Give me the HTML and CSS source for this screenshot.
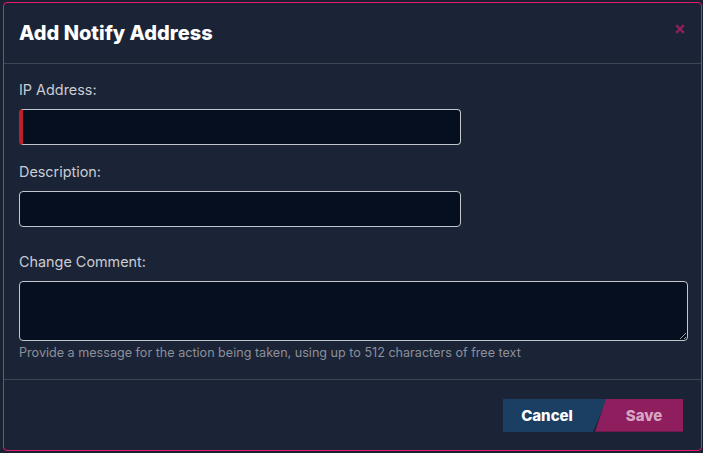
FILE: index.html
```html
<!DOCTYPE html>
<html>
<head>
<meta charset="utf-8">
<link rel="stylesheet" href="styles.css">
</head>
<body>
<div class="modal">
  <div class="modal-header">
    <h2 class="modal-title">Add Notify Address</h2>
    <span class="close"><svg width="10" height="10" viewBox="0 0 10 10"><path d="M1.2 1.2 L8.8 8.8 M8.8 1.2 L1.2 8.8" stroke="#8e1f5e" stroke-width="2.4" stroke-linecap="butt"/></svg></span>
  </div>
  <div class="modal-body">
    <div class="field">
      <label class="label">IP Address:</label>
      <input class="input invalid" type="text">
    </div>
    <div class="field field-wide">
      <label class="label">Description:</label>
      <input class="input" type="text">
    </div>
    <div class="field">
      <label class="label">Change Comment:</label>
      <textarea class="textarea"></textarea>
      <div class="help">Provide a message for the action being taken, using up to 512 characters of free text</div>
    </div>
  </div>
  <div class="modal-footer">
    <button class="btn btn-cancel">Cancel</button>
    <button class="btn btn-save">Save</button>
  </div>
</div>
</body>
</html>
```

FILE: styles.css
```css
html, body {
  margin: 0;
  padding: 0;
  background: #1a2131;
  font-family: Inter, "Noto Sans", sans-serif;
}
body {
  padding: 2px 1px 2px 3px;
  height: 453px;
  box-sizing: border-box;
}
.modal {
  box-sizing: border-box;
  width: 699px;
  height: 449px;
  border: 1px solid #e8196f;
  border-radius: 4px;
  background: #1b2336;
  display: flex;
  flex-direction: column;
}
.modal-header {
  height: 60px;
  border-bottom: 1px solid #3d4452;
  display: flex;
  align-items: center;
  justify-content: space-between;
  padding: 0 16px 0 15px;
  flex: none;
}
.modal-title {
  margin: 0;
  color: #ffffff;
  font-size: 20px;
  font-weight: 800;
  letter-spacing: 0;
}
.close {
  display: block;
  width: 10px;
  height: 10px;
  margin-top: -8px;
}
.close svg {
  display: block;
}
.modal-body {
  padding: 16px 13px 0 15px;
  flex: 1;
  border-bottom: 1px solid #3d4452;
}
.field {
  display: flex;
  flex-direction: column;
  margin-bottom: 17px;
}
.field-wide {
  margin-bottom: 25px;
}
.label {
  color: #c9ccd3;
  font-size: 14.4px;
  line-height: 20px;
  margin-bottom: 9px;
}
.input {
  box-sizing: border-box;
  width: 442px;
  height: 36px;
  background: #050f20;
  border: 1px solid #c3c6cd;
  border-radius: 4px;
  outline: none;
  color: #fff;
  font-family: inherit;
}
.input.invalid {
  border-left: 4px solid #bd1f2c;
}
.textarea {
  box-sizing: border-box;
  width: 669px;
  height: 60px;
  background: #050f20;
  border: 1px solid #c3c6cd;
  border-radius: 4px;
  outline: none;
  margin: 0;
  color: #fff;
  display: block;
}
.help {
  color: #8b909a;
  font-size: 12.6px;
  line-height: 16px;
  margin-top: 4px;
}
.modal-footer {
  flex: none;
  height: 70px;
  box-sizing: border-box;
  padding: 19px 18px 0 0;
  display: flex;
  justify-content: flex-end;
  align-items: flex-start;
}
.btn {
  border: none;
  height: 33px;
  font-family: Inter, "Noto Sans", sans-serif;
  font-size: 15px;
  font-weight: 800;
  cursor: pointer;
}
.btn-cancel {
  width: 104px;
  background: #1b3f62;
  color: #ffffff;
  clip-path: polygon(0 0, 100% 0, calc(100% - 14px) 100%, 0 100%);
  padding: 0 16px 0 0;
}
.btn-save {
  width: 88px;
  margin-left: -12px;
  background: #8f1e5f;
  color: #d9a6c4;
  clip-path: polygon(11px 0, 100% 0, 100% 100%, 0 100%);
  padding: 0 0 0 10px;
  box-shadow: inset 0 -1px 0 #6e1a4c;
}
```
